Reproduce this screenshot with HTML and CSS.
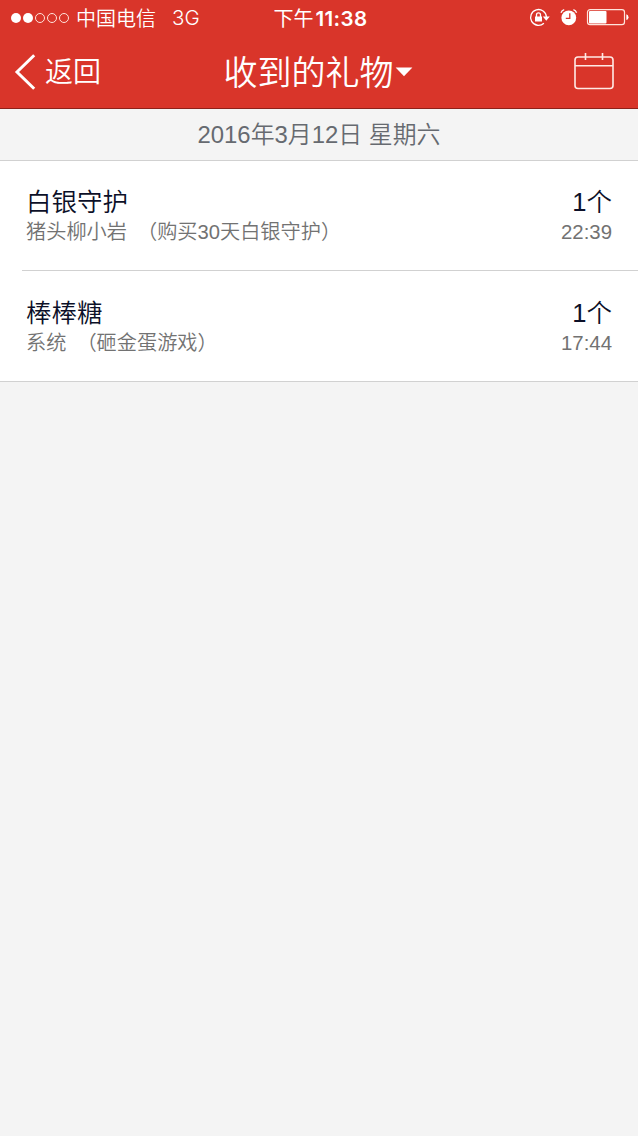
FILE: index.html
```html
<!DOCTYPE html>
<html lang="zh-CN">
<head>
<meta charset="utf-8">
<title>收到的礼物</title>
<link rel="stylesheet" href="styles.css">
</head>
<body>
<header class="header">
  <div class="status">
    <div class="status-left">
      <svg class="signal" width="60" height="12" viewBox="0 0 60 12">
        <g fill="#fff"><circle cx="6" cy="6" r="5"/><circle cx="18" cy="6" r="5"/></g>
        <g fill="none" stroke="#ffe4dc" stroke-width="1"><circle cx="30" cy="6" r="4.5"/><circle cx="42" cy="6" r="4.5"/><circle cx="54" cy="6" r="4.5"/></g>
      </svg>
      <span class="carrier">中国电信</span>
      <span class="network">3G</span>
    </div>
    <div class="clock">下午<b>11:38</b></div>
    <svg class="status-icons" width="102" height="20" viewBox="0 0 102 20">
      <g fill="none" stroke="#fff" stroke-width="1.3">
        <path d="M14.9 15.2A7.9 7.9 0 1 1 17.4 9"/>
        <path d="M7.5 9V6.8a2 2 0 0 1 4 0V9"/>
      </g>
      <path fill="#fff" d="M6 8.5h7v5H6zM13.8 8.5h7l-3.5 4.2z"/>
      <circle cx="39.8" cy="9.8" r="7.4" fill="#fff"/>
      <path d="M32 4.8Q32.8 2.2 35.2 1.6M44.4 1.6Q46.8 2.2 47.6 4.8" fill="none" stroke="#fff" stroke-width="1.3"/>
      <path d="M40.8 5.3v5.1h-4" fill="none" stroke="#d9352a" stroke-width="1.3"/>
      <rect x="58.5" y="1.6" width="37" height="15" rx="2.6" fill="none" stroke="#ffe4dc" stroke-width="1.2"/>
      <rect x="60" y="3" width="17.5" height="12.4" rx="1" fill="#fff"/>
      <path d="M97.3 6.3q2.2.6 2.2 2.9t-2.2 2.9z" fill="#fff"/>
    </svg>
  </div>
  <nav class="nav">
    <div class="back">
      <svg width="22" height="38" viewBox="0 0 22 38"><path d="M20.2 2.2 3 19l17.2 16.8" fill="none" stroke="#fff" stroke-width="3"/></svg>
      <span>返回</span>
    </div>
    <h1 class="title"><span>收到的礼物</span><svg width="18" height="10" viewBox="0 0 18 10"><path d="M.6.5h16.8L9 9.3z" fill="#fff"/></svg></h1>
    <svg class="calendar" width="40" height="37" viewBox="0 0 40 37">
      <g fill="none" stroke="#ffeae6" stroke-width="1.6"><rect x="1" y="4" width="38" height="31.5" rx="3"/><path d="M1 12.7h38M11.5 0v7M28.5 0v7"/></g>
    </svg>
  </nav>
</header>
<main>
  <div class="date">2016年3月12日 星期六</div>
  <ul class="gifts">
    <li class="gift">
      <div class="line name"><span>白银守护</span><span class="count">1个</span></div>
      <div class="line detail"><span>猪头柳小岩<span class="note">（购买30天白银守护）</span></span><span class="time">22:39</span></div>
    </li>
    <li class="gift">
      <div class="line name"><span>棒棒糖</span><span class="count">1个</span></div>
      <div class="line detail"><span>系统<span class="note">（砸金蛋游戏）</span></span><span class="time">17:44</span></div>
    </li>
  </ul>
</main>
</body>
</html>
```
FILE: styles.css
```css
* { box-sizing: border-box; }
body {
  margin: 0;
  min-height: 1136px;
  background: #f4f4f4;
  font-family: "Liberation Sans", "Noto Sans CJK SC", sans-serif;
  font-weight: 350;
  white-space: nowrap;
}
.header {
  height: 109px;
  color: #fff;
  background: #d9352a;
  border-bottom: 1px solid #8e211a;
}
.status {
  display: grid;
  grid-template-columns: 1fr auto 1fr;
  align-items: center;
  height: 36px;
  padding: 0 7px 0 10px;
  font-size: 20px;
}
.status-left { display: flex; align-items: center; }
.carrier { margin-left: 6px; padding-bottom: 2px; }
.network { margin-left: 16px; padding-bottom: 1px; font-family: Inter, sans-serif; font-size: 20.5px; font-weight: 300; }
.clock { padding-bottom: 2px; font-weight: 400; }
.clock b { margin-left: 2px; font-family: Inter, sans-serif; font-weight: 600; font-size: 20.5px; letter-spacing: .4px; }
.status-icons { justify-self: end; }
.nav {
  display: grid;
  grid-template-columns: 1fr auto 1fr;
  align-items: center;
  height: 71px;
  padding: 0 24px 0 14px;
}
.back { display: flex; align-items: center; gap: 9px; font-size: 28px; }
.back span { padding-bottom: 3px; }
.title {
  display: flex;
  align-items: center;
  gap: 1px;
  margin: 0 0 0 8px;
  font-size: 34px;
  font-weight: 350;
}
.title span { margin-bottom: 3px; }
.title svg { margin-top: 1px; }
.calendar { justify-self: end; }
.date {
  height: 52px;
  border-bottom: 1px solid #d1d1d1;
  color: #666a70;
  font-size: 23.9px;
  line-height: 52px;
  text-align: center;
}
.gifts {
  margin: 0;
  padding: 0;
  list-style: none;
  background: #fff;
  border-bottom: 1px solid #d1d1d1;
}
.gift { height: 109px; margin-left: 22px; padding: 25px 26px 0 4px; }
.gift + .gift { height: 111px; border-top: 1px solid #d1d1d1; padding-top: 26px; }
.line { display: flex; justify-content: space-between; }
.name { height: 32px; font-size: 25.5px; line-height: 32px; color: #0c1028; }
.detail { height: 28px; font-size: 20.2px; line-height: 28px; color: #727272; }
.note { margin-left: 10px; }
.time { font-size: 20.4px; }
```
